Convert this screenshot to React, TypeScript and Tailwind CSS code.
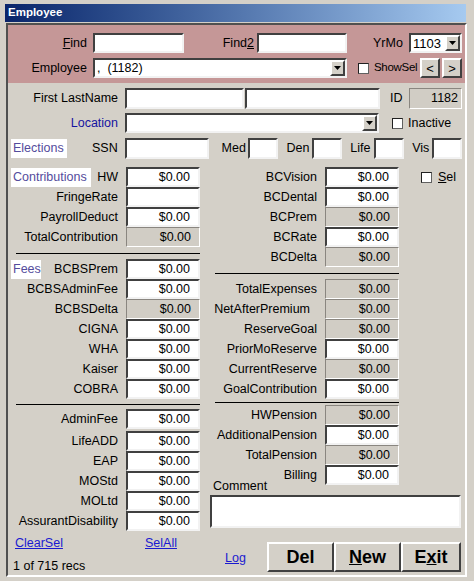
import React from "react";

// 3D borders in the old Windows style
const sunken =
  "border-2 border-t-[#404040] border-l-[#404040] border-r-[#f2f2f2] border-b-[#f2f2f2]";
const flat =
  "border border-t-[#8a8680] border-l-[#8a8680] border-r-white border-b-white";
const raised =
  "border-2 border-t-white border-l-white border-r-[#404040] border-b-[#404040]";

const Arrow = () => (
  <svg width="7" height="4" viewBox="0 0 7 4">
    <polygon points="0,0 7,0 3.5,4" fill="#000" />
  </svg>
);

function Box({
  value = "",
  gray = false,
  className = "",
}: {
  value?: string;
  gray?: boolean;
  className?: string;
}) {
  return (
    <div
      className={`${gray ? `bg-[#d1cdc5] ${flat}` : `bg-white ${sunken}`} flex items-center justify-end pr-[8px] ${className}`}
    >
      {value}
    </div>
  );
}

function Combo({ text = "", className = "" }: { text?: string; className?: string }) {
  return (
    <div className={`bg-white ${sunken} flex items-stretch ${className}`}>
      <span className="flex-1 pl-[2px] flex items-center whitespace-pre">{text}</span>
      <div className={`w-[15px] bg-[#d4d0c8] ${raised} flex items-center justify-center`}>
        <Arrow />
      </div>
    </div>
  );
}

const Check = ({ className = "" }: { className?: string }) => (
  <div
    className={`w-[11px] h-[11px] bg-white border border-t-[#202020] border-l-[#202020] border-r-[#606060] border-b-[#606060] ${className}`}
  />
);

const Tag = ({ children, w }: { children: React.ReactNode; w: string }) => (
  <div className={`ml-[3px] ${w} h-[19px] bg-white text-[#544c9c] flex items-center pl-[2px]`}>
    {children}
  </div>
);

type RowProps = {
  label: string;
  value?: string;
  gray?: boolean;
  tag?: React.ReactNode;
  pr?: string;
};

function LeftRow({ label, value = "$0.00", gray, tag, pr = "pr-0" }: RowProps) {
  return (
    <div className="h-[20px] flex items-center">
      <div className={`w-[110px] flex items-center ${pr}`}>
        {tag}
        <span className="ml-auto">{label}</span>
      </div>
      <Box value={value} gray={gray} className="ml-[8px] w-[74px] h-[20px]" />
    </div>
  );
}

function RightRow({ label, value = "$0.00", gray, pr = "pr-0", extra }: RowProps & { extra?: React.ReactNode }) {
  return (
    <div className="h-[20px] flex items-center">
      <div className={`w-[112px] text-right ${pr}`}>{label}</div>
      <Box value={value} gray={gray} className="ml-[8px] w-[74px] h-[20px]" />
      {extra}
    </div>
  );
}

const Sep = ({ h, pl }: { h: string; pl: string }) => (
  <div className={`${h} ${pl} flex items-center`}>
    <div className="w-[184px] h-[1px] bg-black" />
  </div>
);

export default function App() {
  return (
    <div className="w-[474px] h-[581px] bg-[#d4d0c8] pt-[4px] pl-[5px] overflow-hidden font-['Liberation_Sans',Arial,sans-serif] text-[12.5px] text-black leading-none">
      {/* title bar */}
      <div className="w-[461px] h-[18px] bg-linear-to-r from-[#0a246a] to-[#a6caf0] flex items-center pl-[3px] text-white font-bold text-[11.5px]">
        Employee
      </div>

      {/* client area */}
      <div className="mt-[1px] ml-[1px] w-[461px] h-[554px] border-2 border-t-[#505050] border-l-[#505050] border-r-white border-b-white flex flex-col">
        {/* header */}
        <div className="h-[58px] bg-[#c59797] pt-[8px] pr-[3px]">
          <div className="h-[20px] flex items-center">
            <div className="w-[79px] text-right">
              <u>F</u>ind
            </div>
            <div className={`ml-[6px] w-[91px] h-[20px] bg-white ${sunken}`} />
            <div className="w-[70px] text-right">
              Find<u>2</u>
            </div>
            <div className={`ml-[3px] w-[90px] h-[20px] bg-white ${sunken}`} />
            <div className="ml-[26px] w-[36px]">YrMo</div>
            <Combo text="1103" className="w-[53px] h-[20px] text-[13px]" />
          </div>
          <div className="mt-[5px] h-[20px] flex items-center">
            <div className="w-[79px] text-right">Employee</div>
            <Combo text=",  (1182)" className="ml-[6px] w-[254px] h-[20px]" />
            <Check className="ml-[11px]" />
            <span className="ml-[5px] text-[11.5px] tracking-[-0.3px]">ShowSel</span>
            <div className="ml-auto flex gap-[2px]">
              <div className={`w-[20px] h-[20px] bg-[#d4d0c8] ${raised} flex items-center justify-center text-[13px] font-light`}>
                &lt;
              </div>
              <div className={`w-[20px] h-[20px] bg-[#d4d0c8] ${raised} flex items-center justify-center text-[13px] font-light`}>
                &gt;
              </div>
            </div>
          </div>
        </div>

        {/* body */}
        <div className="flex-1 pt-[5px] pr-[3px]">
          <div className="h-[21px] flex items-center">
            <div className="w-[110px] text-right">First LastName</div>
            <div className={`ml-[7px] w-[119px] h-[21px] bg-white ${sunken}`} />
            <div className={`ml-[1px] w-[135px] h-[21px] bg-white ${sunken}`} />
            <span className="ml-[10px]">ID</span>
            <Box value="1182" gray className="ml-auto w-[53px] h-[21px] !pr-[3px]" />
          </div>
          <div className="mt-[4px] h-[20px] flex items-center">
            <div className="w-[110px] text-right text-[#1414a0]">Location</div>
            <Combo className="ml-[7px] w-[254px] h-[20px]" />
            <Check className="ml-[13px]" />
            <span className="ml-[5px]">Inactive</span>
          </div>
          <div className="mt-[5px] h-[21px] flex items-center">
            <Tag w="w-[56px]">Elections</Tag>
            <div className="w-[51px] text-right">SSN</div>
            <div className={`ml-[7px] w-[84px] h-[21px] bg-white ${sunken}`} />
            <div className="ml-[13px] w-[27px]">Med</div>
            <div className={`w-[30px] h-[21px] bg-white ${sunken}`} />
            <div className="ml-[8px] w-[26px]">Den</div>
            <div className={`w-[30px] h-[21px] bg-white ${sunken}`} />
            <div className="ml-[8px] w-[24px]">Life</div>
            <div className={`w-[30px] h-[21px] bg-white ${sunken}`} />
            <div className="ml-[8px] w-[20px]">Vis</div>
            <div className={`w-[30px] h-[21px] bg-white ${sunken}`} />
          </div>

          <div className="mt-[8px] flex">
            {/* left column */}
            <div className="w-[197px] flex flex-col">
              <LeftRow label="HW" tag={<Tag w="w-[80px]">Contributions</Tag>} />
              <LeftRow label="FringeRate" value="" />
              <LeftRow label="PayrollDeduct" />
              <LeftRow label="TotalContribution" gray />
              <Sep h="h-[12px]" pl="pl-[8px]" />
              <LeftRow label="BCBSPrem" tag={<Tag w="w-[30px]">Fees</Tag>} />
              <LeftRow label="BCBSAdminFee" />
              <LeftRow label="BCBSDelta" gray />
              <LeftRow label="CIGNA" />
              <LeftRow label="WHA" />
              <LeftRow label="Kaiser" />
              <LeftRow label="COBRA" />
              <Sep h="h-[10px]" pl="pl-[8px]" />
              <LeftRow label="AdminFee" />
              <div className="mt-[2px]" />
              <LeftRow label="LifeADD" />
              <LeftRow label="EAP" />
              <LeftRow label="MOStd" />
              <LeftRow label="MOLtd" />
              <LeftRow label="AssurantDisability" />
              <div className="mt-[4px] h-[16px] flex items-center text-[#1a1ad0]">
                <span className="ml-[7px] w-[130px] underline">ClearSel</span>
                <span className="underline">SelAll</span>
              </div>
              <div className="mt-[7px] h-[16px] flex items-center ml-[5px]">1 of 715 recs</div>
            </div>

            {/* right column */}
            <div className="flex-1 flex flex-col">
              <RightRow
                label="BCVision"
                extra={
                  <div className="ml-[22px] flex items-center">
                    <Check />
                    <span className="ml-[6px]">
                      <u>S</u>el
                    </span>
                  </div>
                }
              />
              <RightRow label="BCDental" />
              <RightRow label="BCPrem" gray />
              <RightRow label="BCRate" />
              <RightRow label="BCDelta" gray />
              <Sep h="h-[12px]" pl="pl-[10px]" />
              <RightRow label="TotalExpenses" gray />
              <RightRow label="NetAfterPremium" gray pr="pr-[7px]" />
              <RightRow label="ReserveGoal" gray />
              <RightRow label="PriorMoReserve" />
              <RightRow label="CurrentReserve" gray />
              <RightRow label="GoalContribution" />
              <Sep h="h-[6px]" pl="pl-[10px]" />
              <RightRow label="HWPension" gray />
              <RightRow label="AdditionalPension" />
              <RightRow label="TotalPension" gray />
              <RightRow label="Billing" />
              <div className="-mt-[6px] ml-[8px] h-[14px] flex items-center">Comment</div>
              <div className={`mt-[2px] ml-[5px] w-[251px] h-[33px] bg-white ${sunken}`} />
              <div className="mt-[14px] h-[30px] flex items-center">
                <div className="w-[62px] pl-[20px] pt-[2px] text-[#1a1ad0] underline">Log</div>
                {[
                  { t: <>Del</>, w: "w-[67px]" },
                  { t: <><u>N</u>ew</>, w: "w-[67px]" },
                  { t: <>E<u>x</u>it</>, w: "w-[60px]" },
                ].map((b, i) => (
                  <div
                    key={i}
                    className={`${b.w} h-[30px] bg-[#d4d0c8] ${raised} flex items-center justify-center font-bold text-[18px]`}
                  >
                    {b.t}
                  </div>
                ))}
              </div>
            </div>
          </div>
        </div>
      </div>
    </div>
  );
}
